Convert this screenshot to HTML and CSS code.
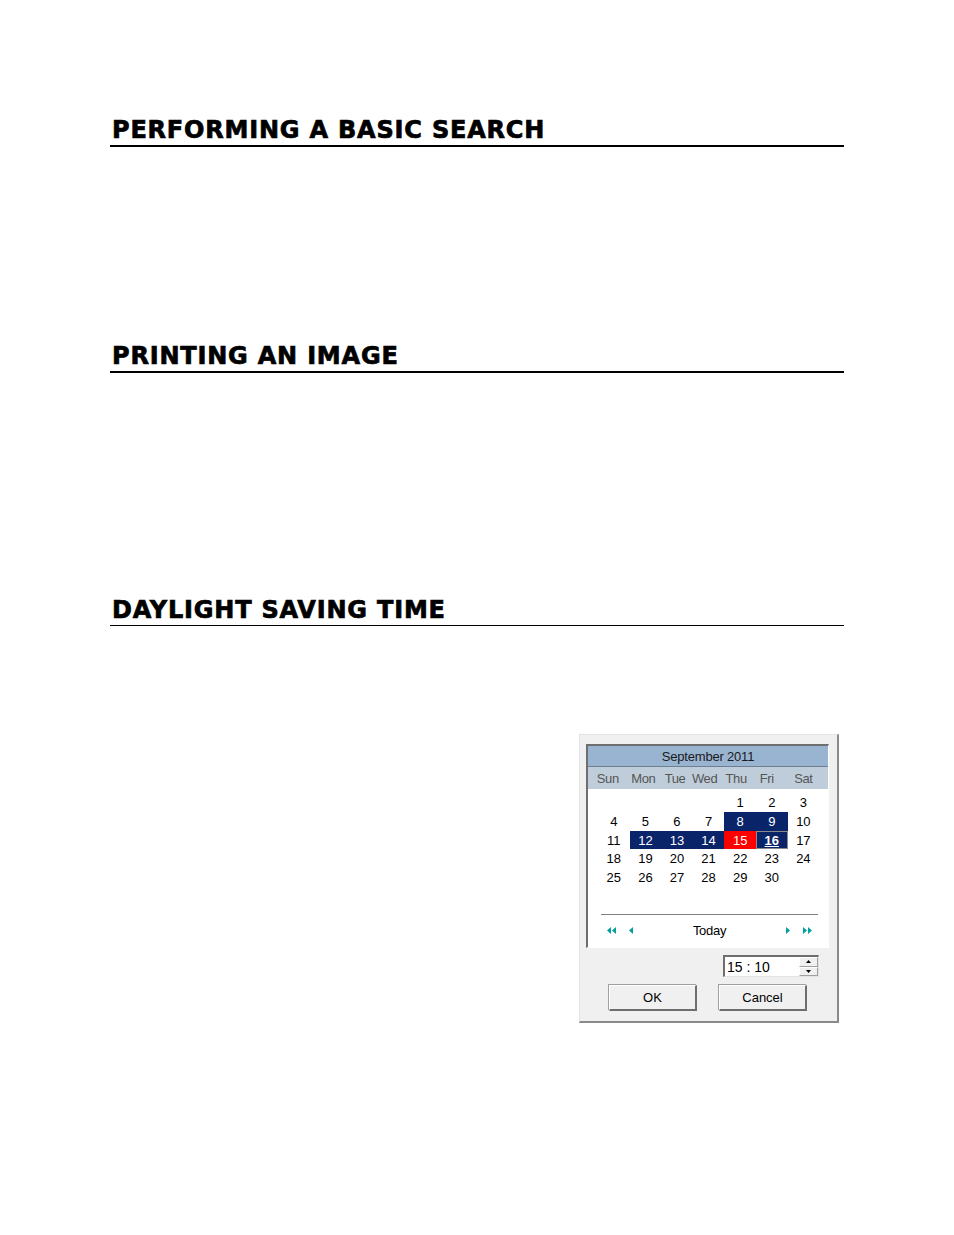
FILE: index.html
```html
<!DOCTYPE html>
<html>
<head>
<meta charset="utf-8">
<link rel="stylesheet" href="styles.css">
</head>
<body>
<div class="page">
  <section class="sec sec1">
    <h2 class="head thick">PERFORMING A BASIC SEARCH</h2>
  </section>
  <section class="sec sec2">
    <h2 class="head thick">PRINTING AN IMAGE</h2>
  </section>
  <section class="sec sec3">
    <h2 class="head thin">DAYLIGHT SAVING TIME</h2>
  </section>
  <div class="dlg-row">
    <div class="dlg">
      <div class="cal">
        <div class="cal-title">September 2011</div>
        <div class="cal-days">
          <span class="d0">Sun</span><span class="d1">Mon</span><span class="d2">Tue</span><span class="d3">Wed</span><span class="d4">Thu</span><span class="d5">Fri</span><span class="d6">Sat</span>
        </div>
        <div class="cal-grid">
          <span></span><span></span><span></span><span></span><span>1</span><span>2</span><span>3</span>
          <span>4</span><span>5</span><span>6</span><span>7</span><span class="sel">8</span><span class="sel">9</span><span>10</span>
          <span>11</span><span class="sel">12</span><span class="sel">13</span><span class="sel">14</span><span class="red">15</span><span class="today">16</span><span>17</span>
          <span>18</span><span>19</span><span>20</span><span>21</span><span>22</span><span>23</span><span>24</span>
          <span>25</span><span>26</span><span>27</span><span>28</span><span>29</span><span>30</span><span></span>
        </div>
        <div class="cal-sep"></div>
        <div class="cal-nav">
          <span class="nav-l">
            <svg width="10" height="7" viewBox="0 0 10 7"><path d="M4 0L0 3.5L4 7Z M9 0L5 3.5L9 7Z" fill="#00a0a0"/></svg>
            <svg width="5" height="7" viewBox="0 0 5 7"><path d="M4 0L0 3.5L4 7Z" fill="#00a0a0"/></svg>
          </span>
          <span class="today-lbl">Today</span>
          <span class="nav-r">
            <svg width="5" height="7" viewBox="0 0 5 7"><path d="M1 0L5 3.5L1 7Z" fill="#00a0a0"/></svg>
            <svg width="10" height="7" viewBox="0 0 10 7"><path d="M1 0L5 3.5L1 7Z M6 0L10 3.5L6 7Z" fill="#00a0a0"/></svg>
          </span>
        </div>
      </div>
      <div class="time-row">
        <div class="time-box">
          <span class="time-val">15 : 10</span>
          <span class="spin">
            <span class="spin-b"><svg width="5" height="3" viewBox="0 0 5 3"><path d="M2.5 0L5 3H0Z" fill="#000"/></svg></span>
            <span class="spin-b"><svg width="5" height="3" viewBox="0 0 5 3"><path d="M0 0H5L2.5 3Z" fill="#000"/></svg></span>
          </span>
        </div>
      </div>
      <div class="btn-row">
        <div class="btn">OK</div>
        <div class="btn">Cancel</div>
      </div>
    </div>
  </div>
</div>
</body>
</html>
```
FILE: styles.css
```css
html, body { margin: 0; padding: 0; background: #fff; }
.page { width: 954px; height: 1235px; position: relative; overflow: hidden; }
.sec { margin: 0 110px 0 110px; }
.sec1 { padding-top: 115px; }
.sec2 { padding-top: 194px; }
.sec3 { padding-top: 222px; }
.head {
  margin: 0;
  font-family: "DejaVu Sans", sans-serif;
  font-weight: 900;
  font-size: 24px;
  line-height: 30px;
  letter-spacing: 0.8px;
  color: #000;
  padding-left: 2px;
  -webkit-text-stroke: 0.7px #000;
}
.thick { border-bottom: 2px solid #000; }
.thin { border-bottom: 1px solid #000; }
.dlg-row { display: flex; justify-content: flex-end; padding-right: 115px; padding-top: 108px; }
.dlg {
  width: 257px; height: 286px;
  background: #f0f0f0;
  border-top: 1px solid #e3e3e3; border-left: 1px solid #e3e3e3;
  border-right: 2px solid #8a8a8a; border-bottom: 2px solid #8a8a8a;
  box-sizing: content-box;
  font-family: "Liberation Sans", Arial, sans-serif;
  font-size: 13px;
  color: #000;
  display: flex; flex-direction: column;
}
.cal {
  margin: 9px 9px 0 6px;
  width: 240px; height: 201px;
  background: #fff;
  border-top: 2px solid #6e6e6e; border-left: 2px solid #6e6e6e;
  border-right: 1px solid #fff; border-bottom: 1px solid #fff;
  display: flex; flex-direction: column;
  box-sizing: content-box;
}
.cal-title {
  height: 20px; line-height: 22px;
  background: #99b4d1;
  border-bottom: 1px solid #6f7f90;
  text-align: center; color: #1a1a1a;
  letter-spacing: -0.2px;
}
.cal-days {
  height: 22px; background: #bfcddb;
  display: grid; grid-template-columns: repeat(7, 31.6px);
  padding-left: 6px; color: #555;
  line-height: 24px; letter-spacing: -0.4px;
}
.cal-days span { text-align: center; }
.cal-days .d0 { transform: translateX(-2px); }
.cal-days .d1 { transform: translateX(2px); }
.cal-days .d2 { transform: translateX(2px); }
.cal-days .d3 { transform: translateX(0px); }
.cal-days .d4 { transform: translateX(0px); }
.cal-days .d5 { transform: translateX(-1px); }
.cal-days .d6 { transform: translateX(4px); }
.cal-grid {
  margin-top: 4px;
  display: grid; grid-template-columns: repeat(7, 31.6px);
  grid-auto-rows: 18.8px;
  padding-left: 10px;
}
.cal-grid span { text-align: center; line-height: 19px; }
.cal-grid .sel { background: #0a246a; color: #fff; }
.cal-grid .red { background: #ff0000; color: #fff; }
.cal-grid .today { background: #0a246a; color: #fff; font-weight: bold; text-decoration: underline; outline: 1px solid #8a8a8a; outline-offset: -1px; }
.cal-sep { margin: 27px 10px 0 13px; height: 1px; background: #808080; }
.cal-nav {
  display: flex; align-items: center; justify-content: space-between;
  padding: 0 16px 0 19px; height: 36px; margin-top: 0;
}
.nav-l, .nav-r { display: flex; gap: 12px; align-items: center; }
.today-lbl { letter-spacing: -0.3px; margin-left: 0px; }
.time-row { display: flex; justify-content: flex-end; padding: 7px 18px 0 0; }
.time-box {
  width: 93px; height: 19px; background: #fff;
  border-top: 2px solid #6e6e6e; border-left: 2px solid #6e6e6e;
  border-right: 1px solid #e3e3e3; border-bottom: 1px solid #e3e3e3;
  display: flex; justify-content: space-between; align-items: center;
}
.time-val { padding-left: 2px; font-size: 14px; }
.spin { display: flex; flex-direction: column; width: 19px; height: 19px; }
.spin-b { flex: 1; background: #f0f0f0; border: 1px solid #a0a0a0; border-top-color: #fff; border-left-color: #fff; display: flex; align-items: center; justify-content: center; }
.btn-row { display: flex; gap: 22px; padding: 8px 0 0 29px; }
.btn {
  width: 85px; height: 23px; line-height: 24px; text-align: center;
  background: #f0f0f0;
  border-top: 1px solid #fff; border-left: 1px solid #fff;
  border-right: 2px solid #6e6e6e; border-bottom: 2px solid #6e6e6e;
  box-shadow: -1px -1px 0 #a0a0a0;
}
```
